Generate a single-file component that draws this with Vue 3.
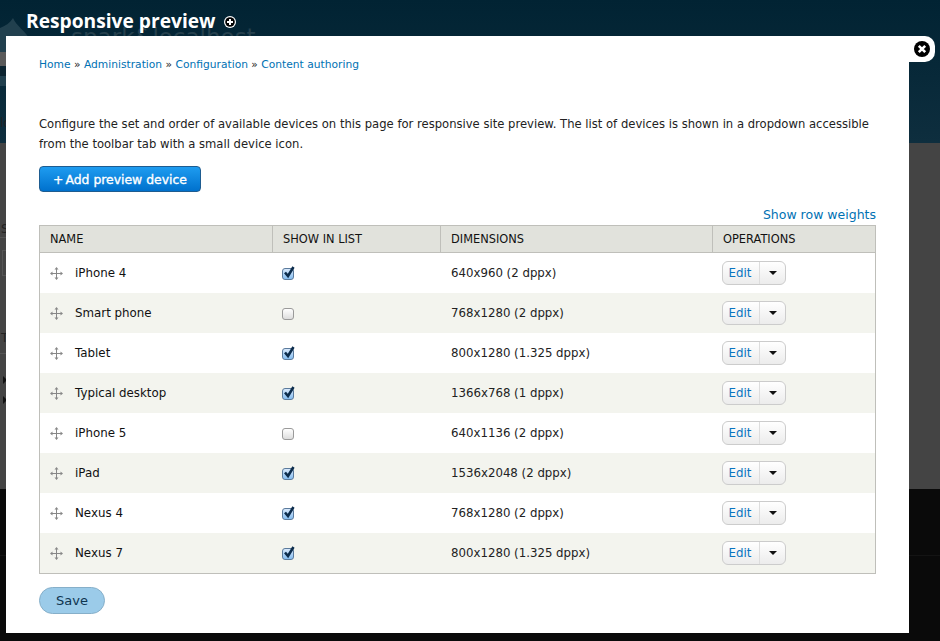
<script setup>
const crumbs = ["Home", "Administration", "Configuration", "Content authoring"];

const devices = [
  { name: "iPhone 4", show: true, dimensions: "640x960 (2 dppx)" },
  { name: "Smart phone", show: false, dimensions: "768x1280 (2 dppx)" },
  { name: "Tablet", show: true, dimensions: "800x1280 (1.325 dppx)" },
  { name: "Typical desktop", show: true, dimensions: "1366x768 (1 dppx)" },
  { name: "iPhone 5", show: false, dimensions: "640x1136 (2 dppx)" },
  { name: "iPad", show: true, dimensions: "1536x2048 (2 dppx)" },
  { name: "Nexus 4", show: true, dimensions: "768x1280 (2 dppx)" },
  { name: "Nexus 7", show: true, dimensions: "800x1280 (1.325 dppx)" },
];
</script>

<template>
  <div class="page">
    <header class="top">
      <!-- site logo, mostly hidden behind the modal -->
      <svg class="logo" viewBox="0 0 30 70" width="30" height="70">
        <path d="M13 2C16 10 26 15 30 24V70H0V12C5 10 10 7 13 2z" fill="#21404e" />
        <path d="M0 36H10V50H0z" fill="#5a5a5a" />
        <path d="M0 50H10V60H0z" fill="#0c2430" />
      </svg>
      <span class="site-name">spark&amp;localhost</span>
      <h1>Responsive preview</h1>
      <svg class="add-shortcut" viewBox="0 0 12 12" width="12" height="12">
        <circle cx="6" cy="6" r="6" fill="#fff" />
        <circle cx="6" cy="6" r="4.8" fill="#000" />
        <path d="M6 3v6M3 6h6" stroke="#fff" stroke-width="2" />
      </svg>
    </header>

    <!-- what peeks out of the page behind the modal -->
    <div class="middle">
      <span class="peek peek-lo">lo</span>
      <span class="peek peek-s">S</span>
      <i class="peek-line peek-line-1"></i>
      <i class="peek-box"></i>
      <span class="peek peek-t">T</span>
      <i class="peek-line peek-line-2"></i>
      <i class="peek-arrow peek-arrow-1"></i>
      <i class="peek-arrow peek-arrow-2"></i>
    </div>
    <div class="bottom"></div>

    <div class="modal">
      <button class="close" aria-label="Close">
        <svg viewBox="0 0 16 16" width="16" height="16">
          <circle cx="8" cy="8" r="8" fill="#000" />
          <path d="M4.8 4.8l6.4 6.4M11.2 4.8l-6.4 6.4" stroke="#fff" stroke-width="2.6" />
        </svg>
      </button>

      <nav class="breadcrumb">
        <template v-for="(crumb, i) in crumbs" :key="crumb">
          <span v-if="i > 0"> » </span>
          <a href="#">{{ crumb }}</a>
        </template>
      </nav>

      <p class="intro">
        Configure the set and order of available devices on this page for responsive site preview. The list of devices is shown in a dropdown accessible from the toolbar tab with a small device icon.
      </p>

      <a class="add-btn" href="#"><span>+</span>Add preview device</a>

      <div class="weights"><a href="#">Show row weights</a></div>

      <table>
        <thead>
          <tr>
            <th class="col-name">NAME</th>
            <th class="col-show">SHOW IN LIST</th>
            <th class="col-dim">DIMENSIONS</th>
            <th>OPERATIONS</th>
          </tr>
        </thead>
        <tbody>
          <tr v-for="device in devices" :key="device.name">
            <td>
              <div class="name-cell">
                <svg class="handle" viewBox="0 0 13 13" width="13" height="13">
                  <path d="M6.5 1v11M1 6.5h11" stroke="#888" stroke-width="1" />
                  <path d="M6.5 0l2 2.5h-4zM6.5 13l2-2.5h-4zM0 6.5l2.5-2v4zM13 6.5l-2.5-2v4z" fill="#888" />
                </svg>
                {{ device.name }}
              </div>
            </td>
            <td>
              <span class="check" :class="{ on: device.show }">
                <svg v-if="device.show" viewBox="0 0 14 14" width="14" height="14">
                  <path d="M3 6.5l3 3.5L11.5 1" fill="none" stroke="#0c2c4c" stroke-width="2.6" />
                </svg>
              </span>
            </td>
            <td class="dim">{{ device.dimensions }}</td>
            <td>
              <div class="ops">
                <a href="#">Edit</a>
                <span class="toggle"><i></i></span>
              </div>
            </td>
          </tr>
        </tbody>
      </table>

      <button class="save">Save</button>
    </div>
  </div>
</template>

<style>
html,
body {
  margin: 0;
  background: #0a0a0a;
}
</style>

<style scoped>
.page {
  position: relative;
  width: 940px;
  height: 641px;
  overflow: hidden;
  display: flex;
  flex-direction: column;
  font-family: "DejaVu Sans", sans-serif;
  font-size: 11.6px;
  color: #222;
}

.top {
  position: relative;
  height: 143px;
  box-sizing: border-box;
  padding: 9px 0 0 26px;
  display: flex;
  align-items: flex-start;
  gap: 8px;
  background: linear-gradient(#012333, #0e2e3e);
}
.top h1 {
  position: relative;
  margin: 0;
  font-size: 19.2px;
  line-height: 24px;
  font-weight: 700;
  color: #fff;
  font-family: "Open Sans", sans-serif;
}
.add-shortcut {
  position: relative;
  margin-top: 7px;
}
.logo {
  position: absolute;
  left: 0;
  top: 16px;
}
.site-name {
  position: absolute;
  left: 71px;
  top: 22px;
  font-size: 23px;
  line-height: 30px;
  color: #25404d;
}

.middle {
  position: relative;
  height: 346px;
  background: #444;
}
.peek {
  position: absolute;
  left: 1px;
  font-size: 12px;
  line-height: 14px;
  color: #222;
}
.peek-lo {
  top: -27px;
  left: 0;
}
.peek-s {
  top: 79px;
}
.peek-t {
  top: 188px;
}
.peek-line {
  position: absolute;
  left: 0;
  width: 6px;
  height: 1px;
  background: #555;
}
.peek-line-1 {
  top: 94px;
}
.peek-line-2 {
  top: 210px;
}
.peek-box {
  position: absolute;
  left: 2px;
  top: 107px;
  width: 6px;
  height: 24px;
  border: 1px solid #555;
}
.peek-arrow {
  position: absolute;
  left: 3px;
  border-left: 4px solid #111;
  border-top: 4px solid transparent;
  border-bottom: 4px solid transparent;
}
.peek-arrow-1 {
  top: 233px;
}
.peek-arrow-2 {
  top: 253px;
}

.bottom {
  flex: 1;
  background: #0a0a0a;
}
.bottom::after {
  content: "";
  display: block;
  height: 1px;
  margin-top: 66px;
  background: #141414;
}

.modal {
  position: absolute;
  left: 6px;
  top: 36px;
  width: 903px;
  height: 597px;
  box-sizing: border-box;
  padding: 22px 33px 0;
  background: #fff;
}

.close {
  position: absolute;
  right: -26px;
  top: 0;
  width: 26px;
  height: 26px;
  padding: 0 0 0 5px;
  border: 0;
  border-radius: 0 10px 10px 0;
  background: #fff;
  display: flex;
  align-items: center;
}

a {
  color: #0071b3;
  text-decoration: none;
}

.breadcrumb {
  font-size: 10.7px;
  line-height: 14px;
}
.breadcrumb span {
  white-space: pre;
}

.intro {
  margin: 42px 0 0;
  line-height: 20px;
  width: 840px;
}

.add-btn {
  display: flex;
  align-items: center;
  justify-content: center;
  gap: 2px;
  width: 162px;
  height: 26px;
  margin-top: 12px;
  box-sizing: border-box;
  border: 1px solid #1e5c90;
  border-radius: 4px;
  background: linear-gradient(#1e9cf0, #0071cd);
  color: #fff;
  font-size: 12.4px;
  -webkit-text-stroke: 0.35px #fff;
}

.weights {
  margin-top: 14px;
  text-align: right;
  font-size: 12.5px;
  line-height: 18px;
}

table {
  width: 837px;
  margin-top: 1px;
  border: 1px solid #bfbfba;
  border-collapse: separate;
  border-spacing: 0;
  table-layout: fixed;
}
th {
  height: 27px;
  padding: 0 10px;
  box-sizing: border-box;
  background: #e1e2dc;
  border-bottom: 1px solid #bfbfba;
  border-left: 1px solid #bfbfba;
  font-size: 11.4px;
  font-weight: 400;
  color: #111;
  text-align: left;
}
th:first-child {
  border-left: 0;
}
.col-name {
  width: 232px;
}
.col-show {
  width: 168px;
}
.col-dim {
  width: 272px;
}
td {
  height: 40px;
  padding: 0 10px;
  box-sizing: border-box;
  font-size: 11.85px;
  color: #222;
}
td.dim {
  padding-left: 11px;
  font-size: 11.78px;
}
tbody tr:nth-child(even) td {
  background: #f3f4ee;
}

.name-cell {
  display: flex;
  align-items: center;
  gap: 12px;
  color: #111;
}
.handle {
  margin-top: 1px;
}

.check {
  display: block;
  position: relative;
  width: 10px;
  height: 10px;
  margin: 1px 0 0;
  border: 1px solid #9a9a9a;
  border-radius: 3px;
  background: linear-gradient(#fff, #ddd);
}
.check.on {
  border-color: #5a7a9c;
  background: linear-gradient(#d8e9fc, #86bdf0);
}
.check svg {
  position: absolute;
  left: -1px;
  top: -3px;
}

.ops {
  display: flex;
  width: 64px;
  height: 24px;
  box-sizing: border-box;
  border: 1px solid #ccc;
  border-radius: 6px;
  background: linear-gradient(#fff, #ececec);
}
.ops a {
  width: 37px;
  padding-right: 2px;
  box-sizing: border-box;
  border-right: 1px solid #ddd;
  text-align: center;
  line-height: 22px;
  color: #0a74c0;
}
.toggle {
  flex: 1;
  display: flex;
  align-items: center;
  justify-content: center;
}
.toggle i {
  border-top: 4px solid #111;
  border-left: 4px solid transparent;
  border-right: 4px solid transparent;
}

.save {
  display: block;
  width: 66px;
  height: 27px;
  margin-top: 13px;
  border: 1px solid #86afc9;
  border-radius: 14px;
  background: #9bcbe9;
  color: #0f3550;
  font-family: inherit;
  font-size: 13px;
  padding: 0;
}
</style>
